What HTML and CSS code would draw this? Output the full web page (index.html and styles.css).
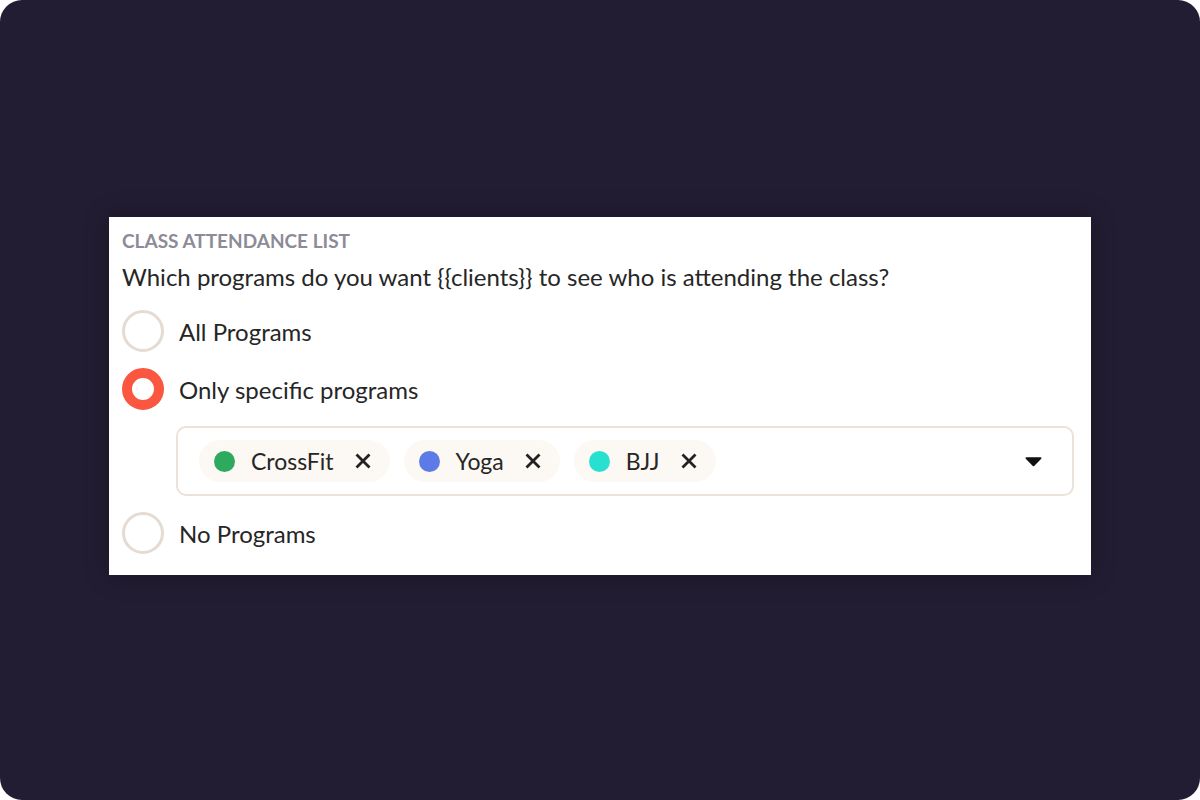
FILE: index.html
```html
<!DOCTYPE html>
<html lang="en">
<head>
    <meta charset="UTF-8">
    <meta name="viewport" content="width=device-width, initial-scale=1.0">
    <title>Class Attendance List</title>
    <link rel="stylesheet" href="styles.css">
</head>
<body>
    <div class="frame">
        <div class="settings-card">
            <div class="section-title">CLASS ATTENDANCE LIST</div>
            <div class="question">Which programs do you want {{clients}} to see who is attending the class?</div>

            <div class="options">
                <label class="option">
                    <span class="radio"></span>
                    <span>All Programs</span>
                </label>
                <label class="option">
                    <span class="radio checked"></span>
                    <span>Only specific programs</span>
                </label>

                <div class="program-select">
                    <div class="tags">
                        <span class="tag">
                            <span class="dot dot-crossfit"></span>
                            <span class="tag-name">CrossFit</span>
                            <svg class="tag-remove" viewBox="0 0 16 16"><path d="M1.5 1.5l13 13M14.5 1.5l-13 13"/></svg>
                        </span>
                        <span class="tag">
                            <span class="dot dot-yoga"></span>
                            <span class="tag-name">Yoga</span>
                            <svg class="tag-remove" viewBox="0 0 16 16"><path d="M1.5 1.5l13 13M14.5 1.5l-13 13"/></svg>
                        </span>
                        <span class="tag">
                            <span class="dot dot-bjj"></span>
                            <span class="tag-name">BJJ</span>
                            <svg class="tag-remove" viewBox="0 0 16 16"><path d="M1.5 1.5l13 13M14.5 1.5l-13 13"/></svg>
                        </span>
                    </div>
                    <svg class="caret" viewBox="0 0 18 11"><path d="M1.5 1h15c.9 0 1.3 1 .7 1.6l-7.5 7.6c-.4.4-1 .4-1.4 0L.8 2.6C.2 2 .6 1 1.5 1z"/></svg>
                </div>

                <label class="option">
                    <span class="radio"></span>
                    <span>No Programs</span>
                </label>
            </div>
        </div>
    </div>
</body>
</html>
```

FILE: styles.css
```css
:root {
    --color-bg: #231d33;
    --color-text: #262626;
    --color-muted: #8d8b97;
    --color-border: #ebe2d9;
    --color-radio: #e4dbd2;
    --color-accent: #fa5640;
    --color-tag: #fcf8f4;
}

body {
    margin: 0;
    background: #ffffff;
    font-family: Lato, 'Open Sans', sans-serif;
    color: var(--color-text);
}

.frame {
    width: 1200px;
    height: 800px;
    background: var(--color-bg);
    border-radius: 22px;
    display: flex;
    justify-content: center;
    align-items: flex-start;
    padding-top: 217px;
    box-sizing: border-box;
}

.settings-card {
    width: 982px;
    box-sizing: border-box;
    background: #ffffff;
    padding: 12px 17px 21px 13px;
    box-shadow: 0 0 22px rgba(0, 0, 0, 0.35);
}

.section-title {
    font-size: 19px;
    line-height: 24px;
    font-weight: 700;
    color: var(--color-muted);
}

.question {
    font-size: 24px;
    line-height: 28px;
    margin-top: 10px;
    margin-bottom: 19px;
}

.options {
    display: flex;
    flex-direction: column;
    gap: 16px;
}

.option {
    display: flex;
    align-items: center;
    gap: 15px;
    font-size: 24px;
    cursor: pointer;
}

.radio {
    width: 42px;
    height: 42px;
    box-sizing: border-box;
    border-radius: 50%;
    border: 3px solid var(--color-radio);
    flex-shrink: 0;
}

.radio.checked {
    border: 10px solid var(--color-accent);
}

.program-select {
    margin-left: 54px;
    height: 70px;
    box-sizing: border-box;
    border: 2px solid var(--color-border);
    border-radius: 10px;
    display: flex;
    align-items: center;
    padding: 0 30px 0 21px;
}

.tags {
    flex: 1;
    display: flex;
    gap: 14px;
}

.tag {
    display: flex;
    align-items: center;
    height: 42px;
    padding: 0 19px 0 15px;
    background: var(--color-tag);
    border-radius: 21px;
    font-size: 23px;
}

.dot {
    width: 21px;
    height: 21px;
    border-radius: 50%;
    margin-right: 16px;
}

.dot-crossfit { background: #2eaa5e; }
.dot-yoga { background: #5d7be6; }
.dot-bjj { background: #28e0d0; }

.tag-remove {
    width: 16px;
    height: 16px;
    margin-left: 21px;
    stroke: #222;
    stroke-width: 2.8;
    fill: none;
}

.caret {
    width: 17px;
    height: 11px;
    fill: #111;
}
```
